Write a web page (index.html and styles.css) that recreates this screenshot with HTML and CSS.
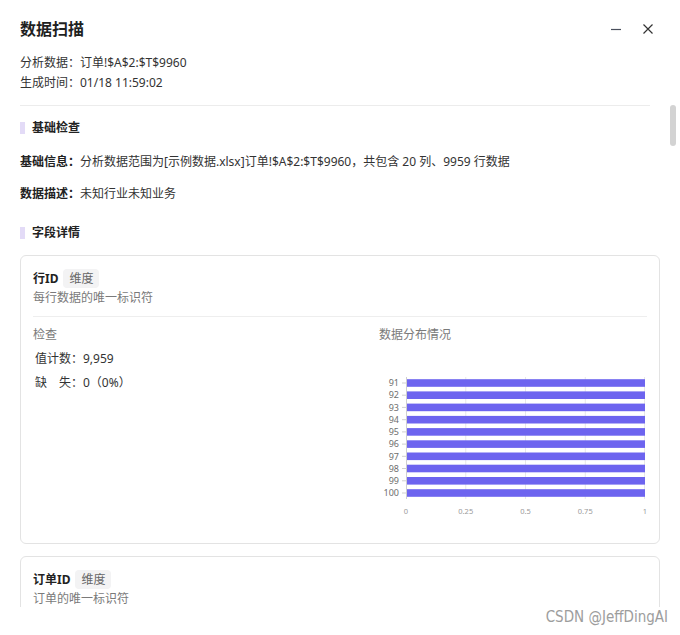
FILE: index.html
```html
<!DOCTYPE html>
<html lang="zh-CN">
<head>
<meta charset="utf-8">
<title>数据扫描</title>
<link rel="stylesheet" href="styles.css">
</head>
<body>
<div class="dialog">
  <header class="head">
    <div class="title-row">
      <h1 class="title">数据扫描</h1>
      <div class="actions">
        <svg class="icon" width="12" height="12" viewBox="0 0 12 12"><path d="M1 6.5H11" stroke="#4a4f5c" stroke-width="1.2"/></svg>
        <svg class="icon" width="12" height="12" viewBox="0 0 12 12"><path d="M1.5 1.5L10.5 10.5M10.5 1.5L1.5 10.5" stroke="#333" stroke-width="1.2"/></svg>
      </div>
    </div>
    <div class="meta">分析数据：订单!$A$2:$T$9960</div>
    <div class="meta">生成时间：01/18 11:59:02</div>
  </header>
  <div class="rule"></div>
  <main class="scroll">
    <h2 class="sec">基础检查</h2>
    <p class="info first"><b>基础信息：</b>分析数据范围为[示例数据.xlsx]订单!$A$2:$T$9960，共包含 20 列、9959 行数据</p>
    <p class="info"><b>数据描述：</b>未知行业未知业务</p>
    <h2 class="sec sec2">字段详情</h2>

    <section class="card">
      <div class="field-head"><span class="fname">行ID</span><span class="tag">维度</span></div>
      <div class="fdesc">每行数据的唯一标识符</div>
      <div class="card-rule"></div>
      <div class="card-body">
        <div class="check">
          <div class="sub">检查</div>
          <div class="stat">值计数：9,959</div>
          <div class="stat">缺　失：0（0%）</div>
        </div>
        <div class="dist">
          <div class="sub">数据分布情况</div>
          <svg class="chart" width="268" height="180" viewBox="0 0 268 180">
            <g stroke="#e8e8e8" stroke-width="1">
              <line x1="86.75" y1="25" x2="86.75" y2="147"/>
              <line x1="146.5" y1="25" x2="146.5" y2="147"/>
              <line x1="206.25" y1="25" x2="206.25" y2="147"/>
              <line x1="265.5" y1="25" x2="265.5" y2="147"/>
            </g>
            <g fill="#6d64ef">
              <rect x="27" y="27.2" width="239" height="7.6"/>
              <rect x="27" y="39.4" width="239" height="7.6"/>
              <rect x="27" y="51.6" width="239" height="7.6"/>
              <rect x="27" y="63.9" width="239" height="7.6"/>
              <rect x="27" y="76.1" width="239" height="7.6"/>
              <rect x="27" y="88.3" width="239" height="7.6"/>
              <rect x="27" y="100.5" width="239" height="7.6"/>
              <rect x="27" y="112.7" width="239" height="7.6"/>
              <rect x="27" y="125" width="239" height="7.6"/>
              <rect x="27" y="137.2" width="239" height="7.6"/>
            </g>
            <g stroke="#cfcfcf" stroke-width="1">
              <line x1="27.5" y1="25" x2="27.5" y2="147"/>
              <line x1="23" y1="31" x2="27" y2="31"/>
              <line x1="23" y1="43.2" x2="27" y2="43.2"/>
              <line x1="23" y1="55.4" x2="27" y2="55.4"/>
              <line x1="23" y1="67.7" x2="27" y2="67.7"/>
              <line x1="23" y1="79.9" x2="27" y2="79.9"/>
              <line x1="23" y1="92.1" x2="27" y2="92.1"/>
              <line x1="23" y1="104.3" x2="27" y2="104.3"/>
              <line x1="23" y1="116.5" x2="27" y2="116.5"/>
              <line x1="23" y1="128.8" x2="27" y2="128.8"/>
              <line x1="23" y1="141" x2="27" y2="141"/>
            </g>
            <g class="ylab" text-anchor="end">
              <text x="20" y="34.2">91</text>
              <text x="20" y="46.4">92</text>
              <text x="20" y="58.6">93</text>
              <text x="20" y="70.9">94</text>
              <text x="20" y="83.1">95</text>
              <text x="20" y="95.3">96</text>
              <text x="20" y="107.5">97</text>
              <text x="20" y="119.7">98</text>
              <text x="20" y="132">99</text>
              <text x="20" y="144.2">100</text>
            </g>
            <g class="xlab" text-anchor="middle">
              <text x="27" y="162">0</text>
              <text x="86.75" y="162">0.25</text>
              <text x="146.5" y="162">0.5</text>
              <text x="206.25" y="162">0.75</text>
              <text x="266" y="162">1</text>
            </g>
          </svg>
        </div>
      </div>
    </section>

    <section class="card card-last">
      <div class="field-head"><span class="fname">订单ID</span><span class="tag">维度</span></div>
      <div class="fdesc">订单的唯一标识符</div>
    </section>
  </main>
  <div class="thumb"></div>
  <div class="watermark">CSDN @JeffDingAI</div>
</div>
</body>
</html>
```
FILE: styles.css
```css
* { box-sizing: border-box; }
html, body { margin: 0; padding: 0; background: #fff; }
body {
  font-family: "Noto Sans", "Noto Sans CJK SC", sans-serif;
  font-size: 12px;
  color: #333;
}
.dialog {
  position: relative;
  width: 680px;
  height: 635px;
  overflow: hidden;
  background: #fff;
}
.head { padding: 17px 26px 0 20px; }
.title-row {
  display: flex;
  align-items: center;
  justify-content: space-between;
  height: 24px;
}
.title {
  margin: 0;
  font-size: 16px;
  line-height: 24px;
  font-weight: 700;
  color: #1f1f1f;
}
.actions { display: flex; align-items: center; gap: 20px; }
.icon { display: block; }
.meta { line-height: 20px; color: #333; }
.title-row + .meta { margin-top: 12px; }
.rule {
  margin: 12px 30px 0 20px;
  height: 1px;
  background: #ececec;
}
.scroll {
  display: block;
  height: 501px;
  overflow: hidden;
  padding: 0 20px;
}
.sec {
  display: flex;
  align-items: center;
  gap: 7px;
  margin: 12px 0 0;
  font-size: 12px;
  line-height: 20px;
  font-weight: 700;
  color: #222;
}
.sec::before {
  content: "";
  width: 5px;
  height: 12px;
  background: #e3dbf7;
}
.sec2 { margin-top: 19px; }
.info { margin: 12px 0 0; line-height: 20px; color: #333; }
.info.first { margin-top: 14px; }
.info b { font-weight: 700; color: #222; }
.card {
  margin-top: 12px;
  border: 1px solid #e3e3e3;
  border-radius: 6px;
  padding: 12px 12px 11px 12px;
}
.card-last { padding-bottom: 40px; }
.field-head { display: flex; align-items: center; gap: 5px; height: 20px; }
.fname { font-weight: 700; color: #222; }
.tag {
  background: #f3f3f4;
  border-radius: 4px;
  padding: 0 6px;
  line-height: 19px;
  color: #666;
}
.fdesc { line-height: 20px; color: #7a7a7a; }
.card-rule { margin-top: 8px; height: 1px; background: #eeeeee; }
.card-body {
  display: grid;
  grid-template-columns: 346px 1fr;
  margin-top: 8px;
}
.sub { line-height: 20px; color: #7a7a7a; }
.stat { margin-top: 4px; line-height: 20px; padding-left: 2px; color: #333; }
.chart { display: block; margin-top: 7px; }
.ylab { font-family: "Noto Sans", sans-serif; font-size: 9px; fill: #6e6e6e; }
.xlab { font-family: "Noto Sans", sans-serif; font-size: 7.5px; fill: #9a9a9a; }
.thumb {
  position: absolute;
  left: 670px;
  top: 105px;
  width: 6px;
  height: 41px;
  border-radius: 3px;
  background: #d3d3d3;
}
.watermark {
  position: absolute;
  right: 12px;
  top: 607px;
  font-family: "Liberation Sans Narrow", "DejaVu Sans Condensed", "Liberation Sans", sans-serif;
  font-stretch: condensed;
  font-size: 15px;
  line-height: 20px;
  color: #9d9d9d;
}
```
